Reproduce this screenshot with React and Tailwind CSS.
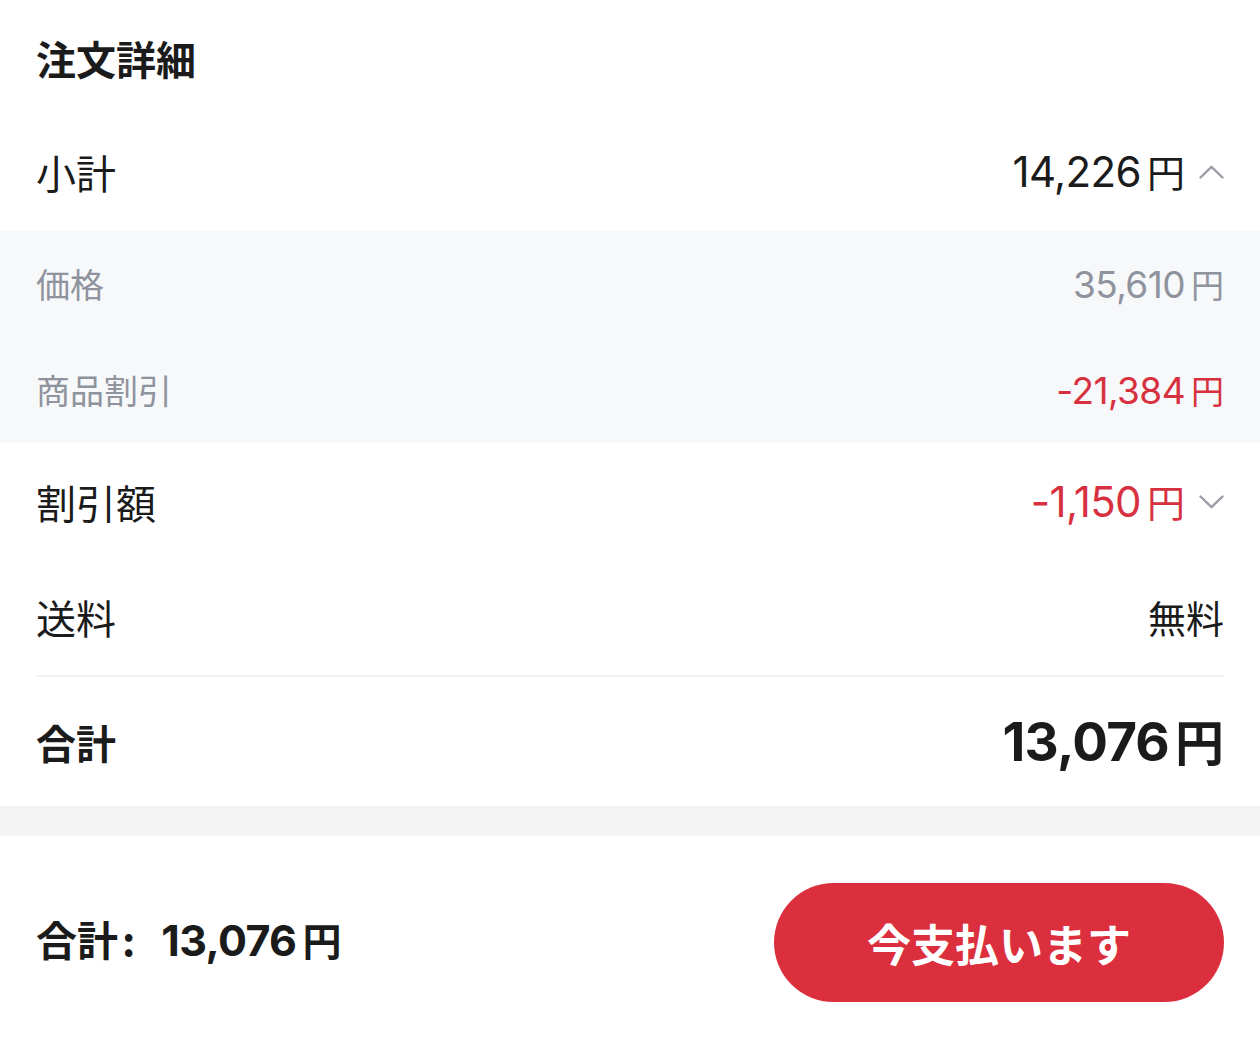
import { useState } from "react";

const font = { fontFamily: '"Noto Sans CJK JP", "Noto Sans", sans-serif' };
const num = { fontFamily: 'Inter, "Noto Sans CJK JP", sans-serif' };

function Chevron({ up }) {
  return (
    <svg width="25" height="14" viewBox="0 0 25 14" className="ml-[14px]" fill="none">
      <polyline
        points={up ? "1.5,12.5 12.5,1.8 23.5,12.5" : "1.5,1.5 12.5,12.2 23.5,1.5"}
        stroke="#9a9ca6"
        strokeWidth="2.4"
        strokeLinecap="round"
        strokeLinejoin="round"
      />
    </svg>
  );
}

function Amount({ value, numClass, yenClass }) {
  return (
    <span className="flex items-baseline">
      <span className={"tracking-[-0.015em] " + numClass} style={num}>{value}</span>
      <span className={"ml-[6px] " + yenClass}>円</span>
    </span>
  );
}

export default function App() {
  const [open, setOpen] = useState(true);

  return (
    <div className="w-[1260px] h-[1057px] bg-white text-[#1b1b1b] flex flex-col" style={font}>
      <div className="h-[120px] px-9 pb-[4px] flex items-center">
        <h1 className="text-[40px] font-bold leading-none">注文詳細</h1>
      </div>

      <div className="h-[111px] px-9 pb-[8px] flex items-center justify-between">
        <span className="text-[40px] leading-none">小計</span>
        <button className="flex items-center" onClick={() => setOpen(!open)}>
          <Amount value="14,226" numClass="text-[42px] leading-none" yenClass="text-[38px] leading-none" />
          <Chevron up={open} />
        </button>
      </div>

      {open && (
        <div className="bg-[#f7f8fa] text-[#8f939e]">
          <div className="h-[106px] px-9 flex items-center justify-between">
            <span className="text-[34px] leading-none">価格</span>
            <Amount value="35,610" numClass="text-[37px] leading-none" yenClass="text-[33px] leading-none" />
          </div>
          <div className="h-[106px] px-9 flex items-center justify-between">
            <span className="text-[34px] leading-none">商品割引</span>
            <span className="text-[#d7313f]">
              <Amount value="-21,384" numClass="text-[37px] leading-none" yenClass="text-[33px] leading-none" />
            </span>
          </div>
        </div>
      )}

      <div className="h-[120px] px-9 pb-[2px] flex items-center justify-between">
        <span className="text-[40px] leading-none">割引額</span>
        <div className="flex items-center text-[#d7313f]">
          <Amount value="-1,150" numClass="text-[42px] leading-none" yenClass="text-[38px] leading-none" />
          <Chevron />
        </div>
      </div>

      <div className="h-[112px] px-9 pb-[4px] flex items-center justify-between">
        <span className="text-[40px] leading-none">送料</span>
        <span className="text-[38px] leading-none">無料</span>
      </div>

      <div className="mx-9 h-[2px] bg-[#f1f1f1]" />

      <div className="h-[129px] px-9 flex items-center justify-between">
        <span className="text-[40px] font-bold leading-none">合計</span>
        <Amount value="13,076" numClass="text-[53px] font-bold leading-none" yenClass="text-[49px] font-bold leading-none" />
      </div>

      <div className="h-[30px] bg-[#f4f4f4]" />

      <div className="flex-1 px-9 pt-[47px] pb-[55px] flex items-center justify-between">
        <div className="flex items-baseline font-bold pb-[6px]">
          <span className="text-[41px] leading-none">合計</span>
          <span className="text-[41px] leading-none ml-[4px] mr-[26px]">:</span>
          <Amount value="13,076" numClass="text-[43px] leading-none" yenClass="text-[39px] leading-none" />
        </div>
        <button className="w-[450px] h-[119px] rounded-full bg-[#dc2f3e] text-white text-[44px] font-bold leading-none flex items-center justify-center">
          今支払います
        </button>
      </div>
    </div>
  );
}
